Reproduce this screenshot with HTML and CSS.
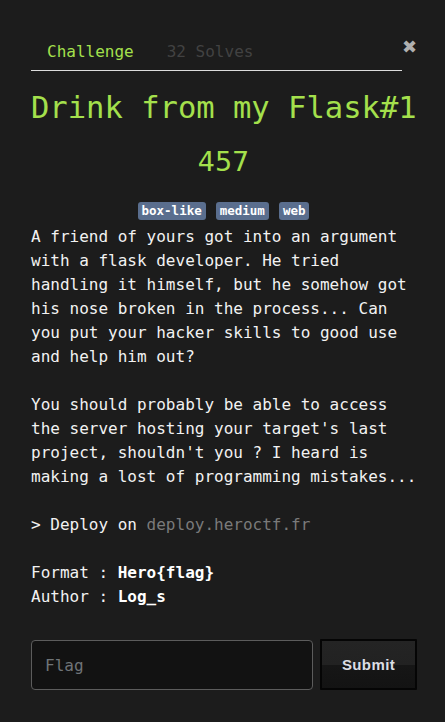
FILE: index.html
```html
<!DOCTYPE html>
<html>
<head>
<meta charset="utf-8">
<link rel="stylesheet" href="styles.css">
</head>
<body>
<div class="modal">
  <div class="header">
    <nav class="tabs">
      <span class="tab active">Challenge</span>
      <span class="tab muted">32 Solves</span>
    </nav>
    <span class="close">&#10006;</span>
  </div>
  <h1 class="title">Drink from my Flask#1</h1>
  <div class="points">457</div>
  <div class="tags">
    <span class="tag">box-like</span>
    <span class="tag">medium</span>
    <span class="tag">web</span>
  </div>
  <div class="desc">
    <p>A friend of yours got into an argument with a flask developer. He tried handling it himself, but he somehow got his nose broken in the process... Can you put your hacker skills to good use and help him out?</p>
    <p>You should probably be able to access the server hosting your target's last project, shouldn't you ? I heard is making a lost of programming mistakes...</p>
    <p>&gt; Deploy on <code>deploy.heroctf.fr</code></p>
    <p>Format : <b>Hero{flag}</b><br>Author : <b>Log_s</b></p>
  </div>
  <form class="submit-row">
    <input class="flag-input" type="text" placeholder="Flag">
    <button class="submit-btn" type="button">Submit</button>
  </form>
</div>
</body>
</html>
```

FILE: styles.css
```css
html, body {
  margin: 0;
  padding: 0;
  background: #1c1c1c;
}
body {
  font-family: "DejaVu Sans Mono", monospace;
  color: #f2f2f2;
  font-size: 16px;
  line-height: 24px;
}
.modal {
  padding: 40px 26px 0 31px;
}
.header {
  display: flex;
  align-items: flex-start;
  margin-right: 3px;
}
.tabs {
  flex: 1;
  display: flex;
  border-bottom: 1px solid #dcdcdc;
  padding-bottom: 6px;
}
.tab {
  padding: 0 16px;
  margin-right: 1px;
}
.tab.active {
  color: #a4e04c;
}
.tab.muted {
  color: #424242;
}
.close {
  width: 14px;
  margin-top: -5px;
  text-align: right;
  color: #b0b0b0;
  font-family: "DejaVu Sans", sans-serif;
  font-size: 18px;
  font-weight: bold;
  line-height: 24px;
}
.title {
  margin: 19px 3px 0 0;
  font-size: 30.5px;
  line-height: 36px;
  font-weight: normal;
  color: #a4e04c;
  text-align: center;
  white-space: nowrap;
}
.points {
  margin-top: 20px;
  font-family: "DejaVu Sans", sans-serif;
  font-size: 27px;
  line-height: 32px;
  color: #a4e04c;
  text-align: center;
  margin-right: 3px;
}
.tags {
  margin-top: 24px;
  display: flex;
  justify-content: center;
  gap: 10px;
  margin-right: 3px;
}
.tag {
  background: #5a6e8e;
  color: #ffffff;
  font-size: 12.5px;
  font-weight: bold;
  line-height: 18px;
  padding: 0 4px;
  border-radius: 3px;
}
.desc {
  margin-top: 5px;
}
.desc p {
  margin: 0 0 24px;
}
.desc p:last-child {
  margin-bottom: 0;
}
.desc code {
  font-family: "DejaVu Sans Mono", monospace;
  color: #7a7a7a;
}
.desc b {
  color: #ffffff;
}
.submit-row {
  margin-top: 31px;
  display: flex;
  gap: 7px;
}
.flag-input {
  flex: none;
  width: 282px;
  height: 50px;
  box-sizing: border-box;
  border: 1px solid #5c5c5c;
  border-radius: 4px;
  background: #121212;
  padding: 0 13px;
  font-family: "DejaVu Sans Mono", monospace;
  font-size: 16px;
  color: #eee;
  outline: none;
}
.flag-input::placeholder {
  color: #6f7478;
}
.submit-btn {
  width: 97px;
  height: 51px;
  box-sizing: border-box;
  border: 2px solid #050505;
  border-radius: 1px;
  background: linear-gradient(#242424 0%, #222 50%, #161616 52%, #131313 100%);
  color: #dcdde4;
  font-family: "Liberation Sans", Arial, sans-serif;
  font-size: 15px;
  font-weight: bold;
  letter-spacing: 0.4px;
  margin-top: -1px;
}
```
